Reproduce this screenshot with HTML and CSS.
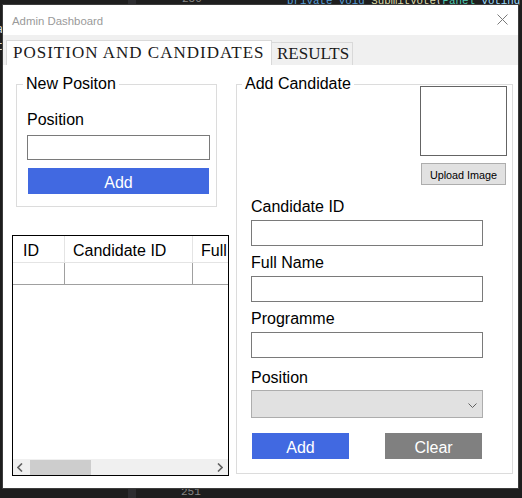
FILE: index.html
```html
<!DOCTYPE html>
<html>
<head>
<meta charset="utf-8">
<link rel="stylesheet" href="styles.css">
</head>
<body>
<div class="editor">
  <pre class="code-left"><span class="c-w">a</span>
<span class="c-w">t</span></pre>
  <div class="gutter-dark"></div>
  <span class="lineno lineno-top">250</span>
  <span class="lineno lineno-bottom">251</span>
  <pre class="code"><span class="c-k">private void</span> <span class="c-m">SubmitVote</span>(<span class="c-t">Panel</span> <span class="c-v">voting</span>
                                                   <span class="c-g">e</span>
                                                  <span class="c-v">a</span>
                                                  <span class="c-v">i</span>

                                                  <span class="c-g">i</span>
                                                  <span class="c-v">T</span>
                                                  <span class="c-w">a</span>

                                                  <span class="c-g">s</span>
                                                  <span class="c-v">c</span>


                                                  <span class="c-o">e</span>




                                                  <span class="c-v">p</span>

                                                  <span class="c-g">a</span>
                                                  <span class="c-v">e</span>


                                                  <span class="c-v">t</span>

                                                  <span class="c-v">r</span></pre>
</div>

<div class="window">
  <div class="titlebar">
    <span class="title">Admin Dashboard</span>
    <svg class="close" width="11" height="11" viewBox="0 0 11 11"><path d="M0.5 0.5 L10.5 10.5 M10.5 0.5 L0.5 10.5" stroke="#7a7a7a" stroke-width="1" fill="none"/></svg>
  </div>
  <div class="tabstrip">
    <div class="tab tab-active">POSITION AND CANDIDATES</div>
    <div class="tab tab-idle">RESULTS</div>
  </div>
  <div class="page">
    <div class="left-col">
      <fieldset class="group group-pos">
        <legend>New Positon</legend>
        <div class="pos-body">
          <div class="label">Position</div>
          <div class="input input-pos"></div>
          <div class="btn btn-blue btn-pos">Add</div>
        </div>
      </fieldset>
      <div class="grid">
        <div class="grid-head">
          <div class="gcell gc1 gc-id">ID</div>
          <div class="gcell gc2">Candidate ID</div>
          <div class="gcell gc3">Full</div>
        </div>
        <div class="grid-row">
          <div class="rcell gc1"></div>
          <div class="rcell gc2"></div>
          <div class="rcell gc3"></div>
        </div>
        <div class="grid-space"></div>
        <div class="hscroll">
          <svg class="arrow" width="6" height="9" viewBox="0 0 6 9"><path d="M5 0.5 L1 4.5 L5 8.5" stroke="#606060" stroke-width="1.6" fill="none"/></svg>
          <div class="thumb"></div>
          <div class="track"></div>
          <svg class="arrow" width="6" height="9" viewBox="0 0 6 9"><path d="M1 0.5 L5 4.5 L1 8.5" stroke="#606060" stroke-width="1.6" fill="none"/></svg>
        </div>
      </div>
    </div>
    <fieldset class="group group-cand">
      <legend>Add Candidate</legend>
      <div class="pic-col">
        <div class="picture"></div>
        <div class="btn-upload">Upload Image</div>
      </div>
      <div class="cand-form">
        <div class="label">Candidate ID</div>
        <div class="input input-cand"></div>
        <div class="label">Full Name</div>
        <div class="input input-cand"></div>
        <div class="label">Programme</div>
        <div class="input input-cand"></div>
        <div class="label label-combo">Position</div>
        <div class="combo">
          <svg width="9" height="5" viewBox="0 0 9 5"><path d="M0.5 0.5 L4.5 4.5 L8.5 0.5" stroke="#606060" stroke-width="1" fill="none"/></svg>
        </div>
        <div class="actions">
          <div class="btn btn-blue btn-act">Add</div>
          <div class="btn btn-gray btn-act">Clear</div>
        </div>
      </div>
    </fieldset>
  </div>
</div>
</body>
</html>
```
FILE: styles.css
```css
html, body {
  margin: 0;
  padding: 0;
}
body {
  width: 522px;
  height: 498px;
  background: #1e1e1e;
  overflow: hidden;
  position: relative;
  font-family: "Liberation Sans", Arial, sans-serif;
}

/* editor backdrop */
.editor {
  position: absolute;
  inset: 0;
  overflow: hidden;
}
.gutter-dark {
  position: absolute;
  left: 128px;
  top: 0;
  width: 8px;
  height: 498px;
  background: #2d2d30;
}
.lineno {
  position: absolute;
  font-family: "Liberation Mono", monospace;
  font-size: 11px;
  color: #858585;
}
.lineno-top { left: 182px; top: -7px; }
.lineno-bottom { left: 181px; top: 486px; }
.code {
  position: absolute;
  left: 287px;
  top: -7px;
  margin: 0;
  font-family: "Liberation Mono", monospace;
  font-size: 10.8px;
  line-height: 16px;
  color: #dcdcdc;
}
.code-left {
  position: absolute;
  left: -4px;
  top: 22px;
  margin: 0;
  font-family: "Liberation Mono", monospace;
  font-size: 12px;
  line-height: 17px;
}
.c-k { color: #569cd6; }
.c-m { color: #dcdcaa; }
.c-t { color: #4ec9b0; }
.c-v { color: #9cdcfe; }
.c-g { color: #57a64a; }
.c-o { color: #d69d85; }
.c-w { color: #dcdcdc; }

/* window */
.window {
  position: absolute;
  left: 3px;
  top: 5px;
  width: 515px;
  height: 483px;
  background: #ffffff;
  box-shadow: 0 0 0 1px #3c3c3c;
  display: flex;
  flex-direction: column;
}
.titlebar {
  height: 30px;
  display: flex;
  align-items: center;
  justify-content: space-between;
  padding: 0 10px 0 9px;
}
.title {
  font-size: 11.4px;
  color: #9a9a9a;
  margin-top: 1px;
}
.close {
  display: block;
  margin-top: -1px;
}

/* tabs */
.tabstrip {
  height: 30px;
  background: #f0f0f0;
  display: flex;
  align-items: flex-end;
  padding-left: 3px;
  box-sizing: border-box;
}
.tab {
  font-family: "Liberation Serif", "Times New Roman", serif;
  font-size: 17px;
  line-height: 17px;
  color: #1a1a1a;
  box-sizing: border-box;
  border: 1px solid #d9d9d9;
  border-bottom: none;
  white-space: nowrap;
}
.tab-active {
  width: 266px;
  height: 25px;
  background: #ffffff;
  padding: 3px 0 0 6px;
  letter-spacing: 1px;
}
.tab-idle {
  width: 81px;
  height: 23px;
  background: #f0f0f0;
  border-left: none;
  padding: 2px 0 0 5px;
}

/* page */
.page {
  flex: 1;
  display: flex;
  align-items: flex-start;
  padding: 10px 0 0 9px;
  box-sizing: border-box;
}
.left-col {
  width: 217px;
  display: flex;
  flex-direction: column;
}

.group {
  margin: 0;
  padding: 0;
  min-width: 0;
  border: 1px solid #dcdcdc;
  box-sizing: border-box;
}
.group legend {
  font-size: 16px;
  line-height: 18px;
  color: #000;
  padding: 0 3px;
}
.group-pos {
  width: 201px;
  margin-left: 4px;
}
.group-pos legend {
  margin-left: 6px;
}
.pos-body {
  padding: 18px 0 12px 10px;
}
.label {
  font-size: 16px;
  line-height: 18px;
  color: #000;
}
.input {
  box-sizing: border-box;
  border: 1px solid #7a7a7a;
  background: #fff;
}
.input-pos {
  width: 183px;
  height: 25px;
  margin-top: 6px;
}
.btn {
  box-sizing: border-box;
  display: flex;
  align-items: center;
  justify-content: center;
  color: #ffffff;
  font-size: 16px;
  padding-top: 3px;
}
.btn-blue { background: #4169e1; }
.btn-gray { background: #808080; }
.btn-pos {
  width: 181px;
  height: 26px;
  margin: 8px 0 0 1px;
}

/* data grid */
.grid {
  margin-top: 28px;
  width: 217px;
  height: 241px;
  border: 1px solid #000;
  box-sizing: border-box;
  display: flex;
  flex-direction: column;
  overflow: hidden;
}
.grid-head, .grid-row {
  display: flex;
  flex: none;
}
.grid-head {
  height: 27px;
  border-bottom: 1px solid #e4e4e4;
  box-sizing: border-box;
}
.gcell {
  font-size: 16px;
  line-height: 23px;
  padding-top: 3px;
  padding-left: 8px;
  color: #000;
  box-sizing: border-box;
  border-right: 1px solid #e4e4e4;
  white-space: nowrap;
  flex: none;
}
.gc1 { width: 52px; }
.gc2 { width: 128px; }
.gc3 { width: 60px; }
.gc-id { padding-left: 10px; }
.grid-row {
  height: 22px;
}
.rcell {
  box-sizing: border-box;
  border-right: 1px solid #a0a0a0;
  border-bottom: 1px solid #a0a0a0;
  flex: none;
}
.grid-space {
  flex: 1;
}
.hscroll {
  height: 16px;
  background: #f0f0f0;
  display: flex;
  align-items: center;
  flex: none;
  padding: 0 5px 0 4px;
}
.arrow {
  display: block;
  flex: none;
}
.thumb {
  width: 61px;
  height: 15px;
  background: #cdcdcd;
  margin-left: 7px;
}
.track {
  flex: 1;
}

/* add candidate */
.group-cand {
  width: 277px;
  margin-left: 7px;
  padding: 0 5px 14px 0;
}
.group-cand legend {
  margin-left: 5px;
}
.pic-col {
  display: flex;
  flex-direction: column;
  align-items: flex-end;
  margin-top: -7px;
}
.picture {
  width: 87px;
  height: 70px;
  box-sizing: border-box;
  border: 1px solid #646464;
  background: #fff;
}
.btn-upload {
  width: 85px;
  height: 22px;
  margin: 7px 1px 0 0;
  box-sizing: border-box;
  border: 1px solid #adadad;
  background: #e1e1e1;
  font-size: 10.8px;
  color: #000;
  display: flex;
  align-items: center;
  justify-content: center;
  padding-top: 1px;
}
.cand-form {
  padding: 13px 0 0 14px;
  display: flex;
  flex-direction: column;
}
.input-cand {
  width: 232px;
  height: 26px;
  margin: 4px 0 8px;
}
.label-combo {
  margin-top: 3px;
}
.combo {
  width: 232px;
  height: 28px;
  margin-top: 3px;
  box-sizing: border-box;
  border: 1px solid #adadad;
  background: #e1e1e1;
  display: flex;
  align-items: center;
  justify-content: flex-end;
  padding: 2px 5px 0 0;
}
.combo svg {
  display: block;
}
.actions {
  display: flex;
  gap: 36px;
  margin: 15px 0 0 1px;
}
.btn-act {
  width: 97px;
  height: 26px;
}
```
